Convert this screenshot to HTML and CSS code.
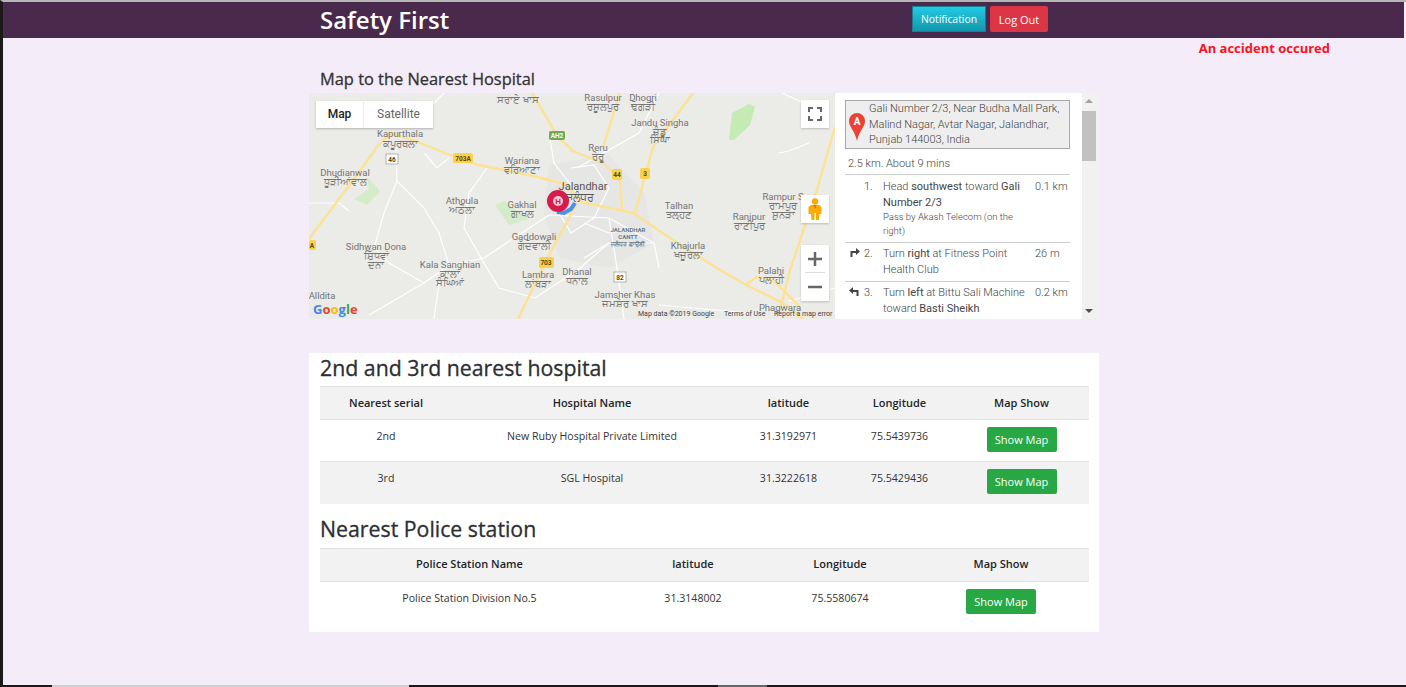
FILE: index.html
```html
<!DOCTYPE html>
<html lang="en">

<head>
    <meta charset="UTF-8">
    <meta name="viewport" content="width=device-width, initial-scale=1.0">
    <title>Safety First</title>
    <link rel="stylesheet" href="styles.css">
</head>

<body>
    <div class="page">
        <header class="topbar">
            <div class="topbar-inner">
                <h1 class="brand">Safety First</h1>
                <div class="topbar-buttons">
                    <button class="btn btn-info">Notification</button>
                    <button class="btn btn-danger">Log Out</button>
                </div>
            </div>
        </header>

        <p class="alert-text">An accident occured</p>

        <main class="container">
            <h3 class="map-title">Map to the Nearest Hospital</h3>

            <div class="map-row">
                <div class="map">
                    <svg class="map-svg" viewBox="0 0 526 226" width="526" height="226">
                        <rect width="526" height="226" fill="#ebebe8" />
                        <!-- city area -->
                        <path d="M240 72 L300 62 L335 100 L345 150 L300 175 L250 165 L235 120 Z" fill="#e6e6e5" />
                        <!-- parks -->
                        <path d="M420 47 L423 20 L440 11 L446 14 L441 32 L425 47 Z" fill="#c5ebb5" />
                        <path d="M45 106 L60 96 L58 84 L71 98 L58 112 Z" fill="#d5ecc8" />
                        <path d="M186 112 L195 108 L220 126 L200 132 Z" fill="#d5ecc8" />
                        <!-- small roads -->
                        <g class="road-small">
                            <path d="M0 110 L30 110 L40 118" />
                            <path d="M135 0 L120 15 L90 30" />
                            <path d="M87 55 L88 88 L115 115 L130 140 L140 172 L115 190 L60 222" />
                            <path d="M88 88 L75 120 L65 155 L80 170 L115 190" />
                            <path d="M115 60 L128 75 L140 65" />
                            <path d="M178 75 L160 100 L155 135 L175 170 L190 195 L226 205" />
                            <path d="M140 172 L175 165 L240 122" />
                            <path d="M240 122 L300 125 L345 150" />
                            <path d="M130 190 L125 226" />
                            <path d="M226 205 L270 176 L300 150" />
                            <path d="M268 75 L330 40 L350 0" />
                            <path d="M268 100 L245 70 L240 40" />
                            <path d="M300 125 L308 175 L315 226" />
                            <path d="M275 165 L300 150 L345 150 L350 175" />
                            <path d="M262 75 L285 72 L300 95 L285 125 L262 140 L250 120" />
                            <path d="M275 130 L300 140 L330 135" />
                            <path d="M470 60 L480 58 L500 50" />
                            <path d="M473 0 L520 22" />
                            <path d="M480 208 L526 195" />
                            <path d="M350 212 L440 220" />
                        </g>
                        <!-- yellow roads -->
                        <g class="road-main">
                            <path d="M0 146 L39 94 L71 50 L83 40 L109 49 L146 64 L169 72 L196 77 L229 84 L259 92 L271 109 L324 120 L364 147 L411 177 L441 194 L474 210 L494 226" />
                            <path d="M384 0 L344 54 L326 120" />
                            <path d="M311 0 L294 54" />
                            <path d="M261 57 L294 70 L311 87 L313 117" />
                            <path d="M223 0 L249 44 L263 57" />
                            <path d="M268 110 L236 170 L209 226" />
                            <path d="M526 34 L508 97 L481 177 L471 217" />
                            <path d="M436 192 L448 184 L464 187 L491 214" />
                        </g>
                        <!-- route and hospital marker -->
                        <path d="M248 119 L255 120 L262 116 L266 110" fill="none" stroke="#4a90e8" stroke-width="4" />
                        <circle cx="249" cy="108" r="11" fill="#d81b4a" />
                        <circle cx="249" cy="108" r="5" fill="#f7c9d6" />
                        <text class="pin-letter" x="249" y="111">H</text>
                        <!-- road shields -->
                        <g class="shield-group">
                            <rect x="240" y="38" width="16" height="9" rx="2" fill="#6fa84f" />
                            <text class="shield-text white" x="248" y="45">AH2</text>
                            <rect x="144" y="60" width="20" height="10" rx="2" fill="#fbd04b" />
                            <text class="shield-text" x="154" y="68">703A</text>
                            <rect x="77" y="61" width="12" height="10" fill="#fff" stroke="#999" stroke-width=".7" />
                            <text class="shield-text" x="83" y="69">46</text>
                            <rect x="303" y="76" width="10" height="11" rx="2" fill="#fbd04b" />
                            <text class="shield-text" x="308" y="84">44</text>
                            <rect x="331" y="75" width="10" height="11" rx="2" fill="#fbd04b" />
                            <text class="shield-text" x="336" y="83">3</text>
                            <rect x="230" y="164" width="15" height="11" rx="2" fill="#fbd04b" />
                            <text class="shield-text" x="237" y="172">703</text>
                            <rect x="305" y="179" width="12" height="10" fill="#fff" stroke="#999" stroke-width=".7" />
                            <text class="shield-text" x="311" y="187">82</text>
                            <rect x="0" y="147" width="7" height="10" rx="2" fill="#fbd04b" />
                            <text class="shield-text" x="3" y="155">A</text>
                        </g>
                        <!-- place names -->
                        <g class="place">
                            <text x="209" y="10">ਸਰਾਏ ਖਾਸ</text>
                            <text x="91" y="44">Kapurthala</text>
                            <text x="91" y="54">ਕਪੂਰਥਲਾ</text>
                            <text x="36" y="83">Dhudianwal</text>
                            <text x="36" y="92">ਧੂੜੀਆਂਵਾਲ</text>
                            <text x="213" y="71">Wariana</text>
                            <text x="213" y="80">ਵਰਿਆਣਾ</text>
                            <text x="153" y="111">Athoula</text>
                            <text x="153" y="120">ਅਠੌਲਾ</text>
                            <text x="213" y="115">Gakhal</text>
                            <text x="213" y="124">ਗਾਖਲ</text>
                            <text x="225" y="147">Gaddowali</text>
                            <text x="225" y="156">ਗੱਦੋਵਾਲੀ</text>
                            <text x="67" y="157">Sidhwan Dona</text>
                            <text x="67" y="166">ਸਿੱਧਵਾਂ</text>
                            <text x="67" y="175">ਦੋਨਾ</text>
                            <text x="141" y="175">Kala Sanghian</text>
                            <text x="141" y="184">ਕਾਲਾ</text>
                            <text x="141" y="193">ਸੰਘਿਆਂ</text>
                            <text x="229" y="185">Lambra</text>
                            <text x="229" y="194">ਲਾਂਬੜਾ</text>
                            <text x="268" y="182">Dhanal</text>
                            <text x="268" y="191">ਧਨਾਲ</text>
                            <text x="294" y="8">Rasulpur</text>
                            <text x="294" y="17">ਰਸੂਲਪੁਰ</text>
                            <text x="334" y="8">Dhogri</text>
                            <text x="334" y="17">ਢੋਗੜੀ</text>
                            <text x="351" y="33">Jandu Singha</text>
                            <text x="351" y="42">ਜੰਡੂ</text>
                            <text x="351" y="50">ਸਿੰਘਾ</text>
                            <text x="289" y="58">Reru</text>
                            <text x="289" y="67">ਰੇਰੂ</text>
                            <text x="370" y="116">Talhan</text>
                            <text x="370" y="125">ਤਲ੍ਹਣ</text>
                            <text x="474" y="107">Rampur S</text>
                            <text x="474" y="116">ਰਾਮਪੁਰ</text>
                            <text x="474" y="125">ਸੁਨੜਾ</text>
                            <text x="440" y="127">Ranipur</text>
                            <text x="440" y="136">ਰਾਣੀਪੁਰ</text>
                            <text x="379" y="156">Khajurla</text>
                            <text x="379" y="165">ਖਜੂਰਲਾ</text>
                            <text x="462" y="181">Palahi</text>
                            <text x="462" y="190">ਪਲਾਹੀ</text>
                            <text x="316" y="205">Jamsher Khas</text>
                            <text x="316" y="214">ਜਮਸ਼ੇਰ ਖਾਸ</text>
                            <text x="471" y="218">Phagwara</text>
                            <text x="13" y="206">Alldita</text>
                        </g>
                        <text class="place-city" x="274" y="97">Jalandhar</text>
                        <text class="place-city" x="271" y="108">ਜਲੰਧਰ</text>
                        <g class="place-cantt">
                            <text x="319" y="139">JALANDHAR</text>
                            <text x="319" y="146">CANTT</text>
                            <text x="319" y="153">ਜਲੰਧਰ ਛਾਉਣੀ</text>
                        </g>
                        <!-- google logo and terms -->
                        <text class="google-logo" x="4" y="221"><tspan fill="#4285f4">G</tspan><tspan fill="#ea4335">o</tspan><tspan fill="#fbbc05">o</tspan><tspan fill="#4285f4">g</tspan><tspan fill="#34a853">l</tspan><tspan fill="#ea4335">e</tspan></text>
                        <text class="map-terms" x="329" y="223">Map data ©2019 Google</text>
                        <text class="map-terms" x="415" y="223">Terms of Use</text>
                        <text class="map-terms" x="465" y="223">Report a map error</text>
                    </svg>

                    <div class="map-type">
                        <span class="map-type-on">Map</span>
                        <span class="map-type-off">Satellite</span>
                    </div>

                    <div class="map-ctrl map-fullscreen">
                        <svg width="14" height="14" viewBox="0 0 14 14">
                            <path d="M1 5V1h4M9 1h4v4M13 9v4H9M5 13H1V9" fill="none" stroke="#666" stroke-width="2" />
                        </svg>
                    </div>

                    <div class="map-ctrl map-pegman">
                        <svg width="14" height="22" viewBox="0 0 14 22">
                            <circle cx="7" cy="3.5" r="3.2" fill="#f9ab00" />
                            <path d="M3 7h8l2.500 2v7h-2l-.5 6H8V15H6.500v7H3.500L3 16H.5V9Z" fill="#f9ab00" />
                            <path d="M5.500 7L7 11 8.500 7Z" fill="#d9730d" />
                        </svg>
                    </div>

                    <div class="map-zoom">
                        <svg class="zoom-btn" width="14" height="14" viewBox="0 0 14 14">
                            <path d="M0 7h14M7 0v14" stroke="#666" stroke-width="2.5" />
                        </svg>
                        <span class="zoom-line"></span>
                        <svg class="zoom-btn" width="14" height="14" viewBox="0 0 14 14">
                            <path d="M0 7h14" stroke="#666" stroke-width="2.500" />
                        </svg>
                    </div>
                </div>

                <aside class="directions">
                    <div class="directions-body">
                        <div class="address">
                            <svg class="address-pin" width="16" height="28" viewBox="0 0 16 28">
                                <path d="M8 0a8 8 0 0 1 8 8c0 6-6 10-8 20C6 18 0 14 0 8a8 8 0 0 1 8-8Z" fill="#ea4335" />
                                <text x="8" y="12">A</text>
                            </svg>
                            <span>Gali Number 2/3, Near Budha Mall Park, Malind Nagar, Avtar Nagar, Jalandhar, Punjab 144003, India</span>
                        </div>
                        <div class="summary">2.5 km. About 9 mins</div>
                        <div class="step">
                            <span class="step-icon"></span>
                            <span class="step-num">1.</span>
                            <div class="step-text">
                                <span class="line">Head <b>southwest</b> toward <b>Gali</b></span>
                                <span class="line"><b>Number 2/3</b></span>
                                <small>Pass by Akash Telecom (on the</small>
                                <small>right)</small>
                            </div>
                            <span class="step-dist">0.1 km</span>
                        </div>
                        <div class="step">
                            <span class="step-icon">
                                <svg width="11" height="10" viewBox="0 0 11 10"><path d="M1.500 10V4h5.500V1l4 3.500-4 3.500V6H3.500v4Z" fill="#444" /></svg>
                            </span>
                            <span class="step-num">2.</span>
                            <div class="step-text">
                                <span class="line">Turn <b>right</b> at Fitness Point</span>
                                <span class="line">Health Club</span>
                            </div>
                            <span class="step-dist">26 m</span>
                        </div>
                        <div class="step">
                            <span class="step-icon">
                                <svg width="11" height="10" viewBox="0 0 11 10"><path d="M9.500 10V4H4V1L0 4.500 4 8V6h3.500v4Z" fill="#444" /></svg>
                            </span>
                            <span class="step-num">3.</span>
                            <div class="step-text">
                                <span class="line">Turn <b>left</b> at Bittu Sali Machine</span>
                                <span class="line">toward <b>Basti Sheikh</b></span>
                            </div>
                            <span class="step-dist">0.2 km</span>
                        </div>
                    </div>
                    <div class="scrollbar">
                        <span class="arrow-up"></span>
                        <span class="scroll-thumb"></span>
                        <span class="arrow-down"></span>
                    </div>
                </aside>
            </div>

            <section class="tables">
                <h2>2nd and 3rd nearest hospital</h2>
                <table class="table table-hospital">
                    <thead>
                        <tr>
                            <th>Nearest serial</th>
                            <th>Hospital Name</th>
                            <th>latitude</th>
                            <th>Longitude</th>
                            <th>Map Show</th>
                        </tr>
                    </thead>
                    <tbody>
                        <tr>
                            <td>2nd</td>
                            <td>New Ruby Hospital Private Limited</td>
                            <td>31.3192971</td>
                            <td>75.5439736</td>
                            <td><button class="btn btn-success">Show Map</button></td>
                        </tr>
                        <tr class="striped">
                            <td>3rd</td>
                            <td>SGL Hospital</td>
                            <td>31.3222618</td>
                            <td>75.5429436</td>
                            <td><button class="btn btn-success">Show Map</button></td>
                        </tr>
                    </tbody>
                </table>

                <h2>Nearest Police station</h2>
                <table class="table table-police">
                    <thead>
                        <tr>
                            <th>Police Station Name</th>
                            <th>latitude</th>
                            <th>Longitude</th>
                            <th>Map Show</th>
                        </tr>
                    </thead>
                    <tbody>
                        <tr>
                            <td>Police Station Division No.5</td>
                            <td>31.3148002</td>
                            <td>75.5580674</td>
                            <td><button class="btn btn-success">Show Map</button></td>
                        </tr>
                    </tbody>
                </table>
            </section>
        </main>

        <div class="bottom-edge">
            <span class="edge-a"></span>
            <span class="edge-b"></span>
        </div>
    </div>
</body>

</html>
```

FILE: styles.css
```css
* {
    box-sizing: border-box;
}

body {
    margin: 0;
    font-family: "Open Sans", "Noto Sans", sans-serif;
    background-color: #f4ecf9;
    color: #212529;
}

.page {
    display: flex;
    flex-direction: column;
    height: 687px;
    overflow: hidden;
    border-left: 3px solid #1c1a18;
    border-top: 2px solid #b5b5b5;
}

.topbar {
    background-color: #4a2a4c;
    height: 36px;
    margin-right: 2px;
    flex-shrink: 0;
}

.topbar-inner {
    display: flex;
    align-items: flex-start;
    width: 790px;
    margin-left: 306px;
    padding-left: 11px;
}

.brand {
    margin: 0;
    width: 592px;
    color: #fff;
    font-size: 24px;
    font-weight: 600;
    line-height: 35px;
}

.topbar-buttons {
    display: flex;
    gap: 4px;
    padding-top: 4px;
}

.btn {
    height: 26px;
    padding: 0 6px;
    border: 0;
    border-radius: 2px;
    color: #fff;
    font-family: inherit;
    font-size: 11px;
    cursor: pointer;
}

.btn-info {
    width: 74px;
    padding: 0;
    border-radius: 0;
    background: linear-gradient(#22cbe4, #1297ad);
    border: 1px solid #14808f;
    font-size: 10.4px;
}

.btn-danger {
    width: 58px;
    background-color: #dc3545;
}

.btn-success {
    width: 70px;
    height: 25px;
    padding: 0;
    background-color: #28a745;
    font-size: 11px;
}

.alert-text {
    margin: 1px 0 0;
    padding-right: 76px;
    height: 18px;
    text-align: right;
    color: #ff1020;
    font-size: 13px;
    font-weight: 700;
    line-height: 18px;
}

.container {
    width: 790px;
    margin-left: 306px;
}

.map-title {
    margin: 10px 0 0;
    padding-left: 11px;
    height: 26px;
    font-size: 16.4px;
    font-weight: 400;
    line-height: 24px;
    color: #333;
    -webkit-text-stroke: 0.3px #333;
}

.map-row {
    display: flex;
    height: 226px;
}

.map {
    position: relative;
    width: 526px;
    height: 226px;
    overflow: hidden;
}

.map-svg {
    display: block;
}

.road-small path {
    fill: none;
    stroke: #fff;
    stroke-width: 1.2;
}

.road-main path {
    fill: none;
    stroke: #fde293;
    stroke-width: 2.4;
}

.pin-letter {
    fill: #d81b4a;
    font: 700 8px Roboto, sans-serif;
    text-anchor: middle;
}

.shield-text {
    fill: #5a4a10;
    font: 700 6.500px Roboto, sans-serif;
    text-anchor: middle;
}

.shield-text.white {
    fill: #fff;
}

.place text {
    fill: #757575;
    font: 9.5px Roboto, "Noto Sans", sans-serif;
    text-anchor: middle;
}

.place-city {
    fill: #555;
    font: 11px Roboto, "Noto Sans", sans-serif;
    text-anchor: middle;
}

.place-cantt text {
    fill: #6a7a8c;
    font: 700 6px Roboto, "Noto Sans", sans-serif;
    text-anchor: middle;
}

.google-logo {
    font: 700 13px "Open Sans", sans-serif;
}

.map-terms {
    fill: #444;
    font: 7px Roboto, sans-serif;
}

.map-type {
    position: absolute;
    top: 8px;
    left: 7px;
    display: flex;
    height: 27px;
    background-color: #fff;
    box-shadow: 0 1px 2px rgba(0, 0, 0, 0.25);
    font-family: Roboto, sans-serif;
    font-size: 12px;
    line-height: 27px;
}

.map-type-on {
    width: 48px;
    text-align: center;
    font-weight: 500;
    color: #222;
    border-right: 1px solid #eee;
}

.map-type-off {
    width: 69px;
    text-align: center;
    color: #666;
}

.map-ctrl {
    position: absolute;
    left: 492px;
    display: flex;
    align-items: center;
    justify-content: center;
    width: 28px;
    height: 28px;
    background-color: #fff;
    box-shadow: 0 1px 2px rgba(0, 0, 0, 0.2);
}

.map-fullscreen {
    top: 7px;
}

.map-pegman {
    top: 102px;
}

.map-zoom {
    position: absolute;
    top: 152px;
    left: 492px;
    display: flex;
    flex-direction: column;
    align-items: center;
    width: 28px;
    height: 56px;
    padding-top: 7px;
    background-color: #fff;
    box-shadow: 0 1px 2px rgba(0, 0, 0, 0.2);
}

.zoom-line {
    width: 20px;
    height: 1px;
    margin: 6px 0 7px;
    background-color: #ddd;
}

.directions {
    display: flex;
    width: 264px;
    height: 226px;
    background-color: #fff;
    overflow: hidden;
    font-family: Roboto, sans-serif;
    font-size: 11px;
    font-weight: 300;
    color: #444;
}

.directions-body {
    width: 247px;
    padding: 7px 12px 0 10px;
}

.address {
    display: flex;
    align-items: center;
    height: 49px;
    padding-left: 3px;
    background-color: #eee;
    border: 1px solid #a8a8a8;
    line-height: 15.500px;
}

.address-pin {
    flex-shrink: 0;
    margin: 4px 4px 0 0;
}

.address-pin text {
    fill: #fff;
    font: 700 10px Roboto, sans-serif;
    text-anchor: middle;
}

.summary {
    height: 26px;
    padding-left: 3px;
    border-bottom: 1px solid #ccc;
    line-height: 29px;
}

.step {
    display: flex;
    padding: 3px 0 4px;
    border-bottom: 1px solid #ccc;
    line-height: 15.500px;
}

.summary + .step {
    padding-top: 4px;
}

.step:last-child {
    border-bottom: 0;
}

.step-icon {
    width: 14px;
    flex-shrink: 0;
    padding: 0 0 0 4px;
}

.step-num {
    width: 24px;
    flex-shrink: 0;
    padding-left: 5px;
}

.step-text {
    width: 151px;
    flex-shrink: 0;
}

.line {
    display: block;
}

.step-text b {
    font-weight: 400;
}

.step-text small {
    display: block;
    font-size: 9.500px;
    line-height: 14px;
}

.step-dist {
    white-space: nowrap;
    padding-left: 1px;
}

.scrollbar {
    position: relative;
    width: 17px;
    background-color: #f1f1f1;
}

.scroll-thumb {
    position: absolute;
    top: 18px;
    left: 0;
    width: 14px;
    height: 50px;
    background-color: #c1c1c1;
}

.arrow-up,
.arrow-down {
    position: absolute;
    left: 3px;
    width: 0;
    height: 0;
    border-left: 4px solid transparent;
    border-right: 4px solid transparent;
}

.arrow-up {
    top: 6px;
    border-bottom: 4px solid #a3a3a3;
}

.arrow-down {
    bottom: 6px;
    border-top: 4px solid #505050;
}

.tables {
    width: 790px;
    height: 279px;
    margin-top: 34px;
    padding: 0 10px 0 11px;
    background-color: #fff;
}

.tables h2 {
    margin: 0;
    height: 33px;
    font-size: 21.3px;
    font-weight: 400;
    line-height: 30px;
    color: #2b2f33;
    -webkit-text-stroke: 0.3px #2b2f33;
}

.table {
    width: 769px;
    border-collapse: collapse;
    table-layout: fixed;
    font-size: 10.6px;
    color: #333;
    margin-bottom: 10px;
}

.table th {
    height: 33px;
    padding: 0 0 2px;
    background-color: #f2f2f2;
    border-top: 1px solid #dee2e6;
    border-bottom: 1px solid #dee2e6;
    text-align: center;
    font-size: 11px;
    font-weight: 600;
    color: #212529;
}

.table td {
    height: 42px;
    padding: 7px 0 0;
    vertical-align: top;
    text-align: center;
    line-height: 18px;
}

.table tbody tr + tr td {
    border-top: 1px solid #dee2e6;
}

.striped td {
    background-color: #f2f2f2;
}

.table-police {
    margin-top: 1px;
}

.table-hospital th:nth-child(1) { width: 132px; }
.table-hospital th:nth-child(2) { width: 280px; }
.table-hospital th:nth-child(3) { width: 113px; }
.table-hospital th:nth-child(4) { width: 109px; }

.table-police th:nth-child(1) { width: 299px; }
.table-police th:nth-child(2) { width: 148px; }
.table-police th:nth-child(3) { width: 146px; }

.bottom-edge {
    position: relative;
    flex-shrink: 0;
    height: 2px;
    margin-top: auto;
    background-color: #1c1a18;
}

.edge-a,
.edge-b {
    position: absolute;
    top: 0;
    height: 2px;
}

.edge-a {
    left: 49px;
    width: 357px;
    background-color: #d0d0d0;
}

.edge-b {
    left: 715px;
    width: 49px;
    background-color: #666;
}
```
